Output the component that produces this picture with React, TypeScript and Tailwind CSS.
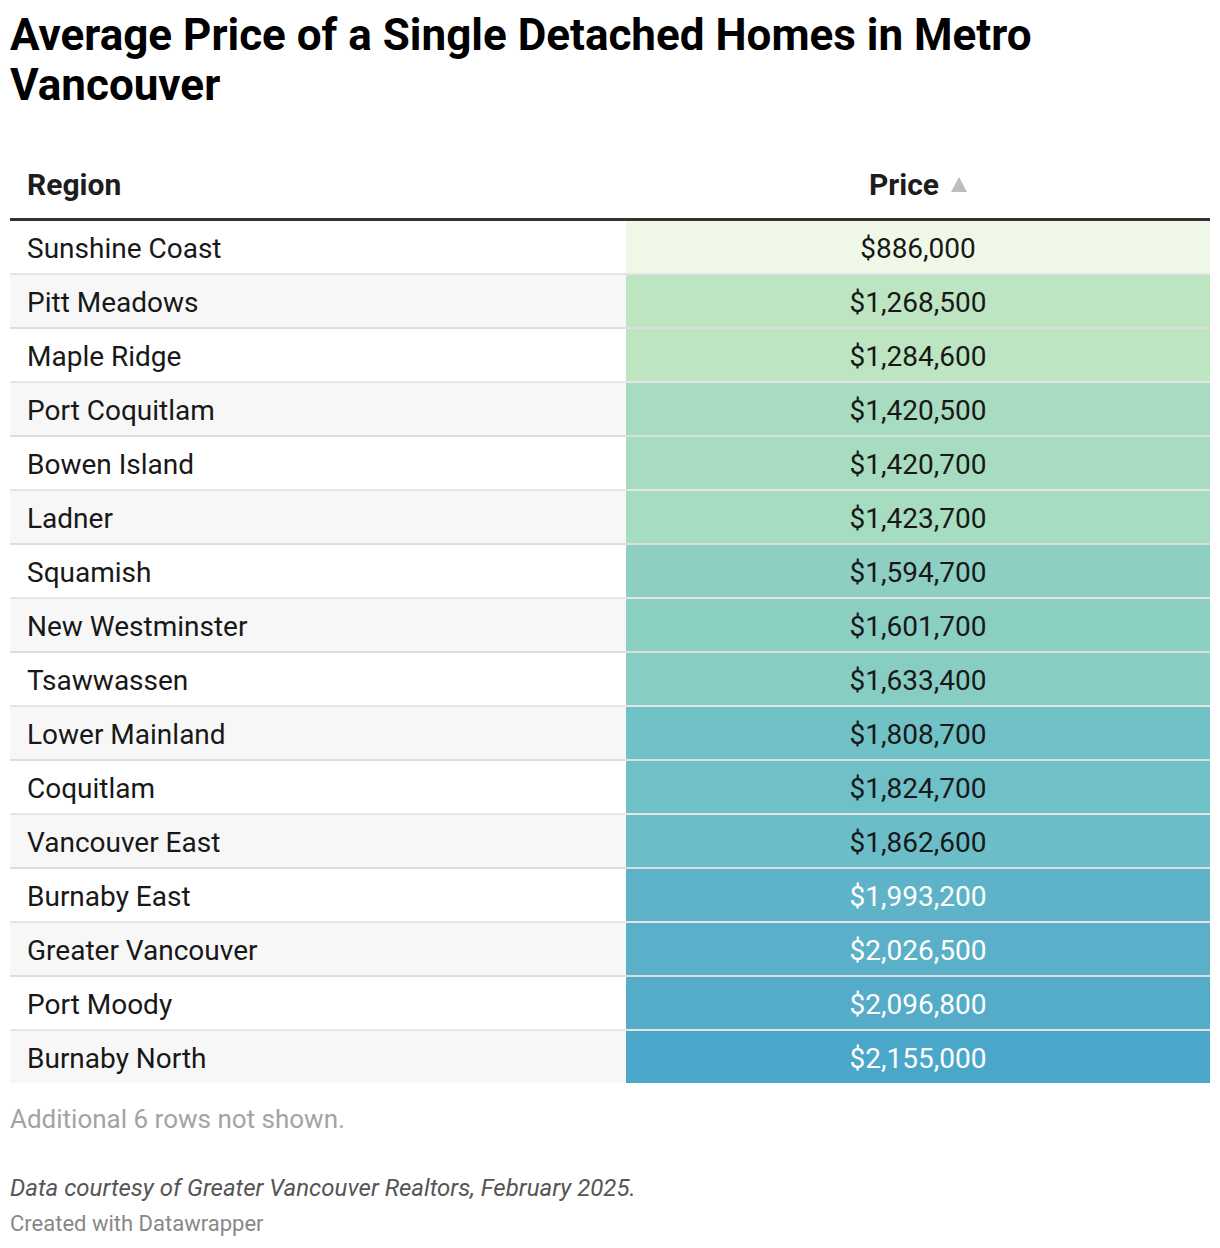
import React from "react";

type Row = { region: string; price: string; bg: string; light?: boolean };

const rows: Row[] = [
  { region: "Sunshine Coast", price: "$886,000", bg: "bg-[#f0f8e8]" },
  { region: "Pitt Meadows", price: "$1,268,500", bg: "bg-[#bee5c2]" },
  { region: "Maple Ridge", price: "$1,284,600", bg: "bg-[#bde5c2]" },
  { region: "Port Coquitlam", price: "$1,420,500", bg: "bg-[#a7dcc0]" },
  { region: "Bowen Island", price: "$1,420,700", bg: "bg-[#a7dcc0]" },
  { region: "Ladner", price: "$1,423,700", bg: "bg-[#a6dcc0]" },
  { region: "Squamish", price: "$1,594,700", bg: "bg-[#8dd0c3]" },
  { region: "New Westminster", price: "$1,601,700", bg: "bg-[#8bcfc3]" },
  { region: "Tsawwassen", price: "$1,633,400", bg: "bg-[#87cdc3]" },
  { region: "Lower Mainland", price: "$1,808,700", bg: "bg-[#70c2c6]" },
  { region: "Coquitlam", price: "$1,824,700", bg: "bg-[#6fc1c7]" },
  { region: "Vancouver East", price: "$1,862,600", bg: "bg-[#6bbec7]" },
  { region: "Burnaby East", price: "$1,993,200", bg: "bg-[#5fb3c8]", light: true },
  { region: "Greater Vancouver", price: "$2,026,500", bg: "bg-[#5ab0c8]", light: true },
  { region: "Port Moody", price: "$2,096,800", bg: "bg-[#54acc9]", light: true },
  { region: "Burnaby North", price: "$2,155,000", bg: "bg-[#4ba7ca]", light: true },
];

export default function App() {
  return (
    <div className="w-[1220px] min-h-[1248px] bg-white px-[10px] pt-[10px] font-['Roboto',sans-serif] text-[#181818]">
      {/* title */}
      <h1 className="text-[44px] leading-[50px] font-bold text-black">
        Average Price of a Single Detached Homes in Metro Vancouver
      </h1>

      {/* table */}
      <div className="mt-[40px]">
        <div className="flex h-[71px] items-center border-b-[3px] border-[#333333] text-[30px] font-bold text-[#1d1d1d]">
          <div className="w-[616px] pl-[17px]">Region</div>
          <div className="flex flex-1 items-center justify-center gap-[12px]">
            <span>Price</span>
            <svg width="16" height="15" viewBox="0 0 16 15" className="mt-[1px]">
              <path d="M8 0 L16 15 L0 15 Z" fill="#bdbdbd" />
            </svg>
          </div>
        </div>

        {rows.map((r, i) => (
          <div
            key={r.region}
            className={`flex text-[28px] ${i < rows.length - 1 ? "h-[54px] border-b-2 border-black/10" : "h-[52px]"} ${i % 2 === 1 ? "bg-[#f7f7f7]" : "bg-white"}`}
          >
            <div className="flex w-[616px] items-center pl-[17px] pt-[3px]">{r.region}</div>
            <div className={`flex flex-1 items-center justify-center pt-[3px] ${r.bg} ${r.light ? "text-white" : "text-[#181818]"}`}>
              {r.price}
            </div>
          </div>
        ))}
      </div>

      {/* notes */}
      <div className="mt-[21px] text-[26px] leading-[30px] text-[#a3a3a3]">Additional 6 rows not shown.</div>
      <div className="mt-[39px] text-[24px] leading-[30px] italic text-[#555555]">
        Data courtesy of Greater Vancouver Realtors, February 2025.
      </div>
      <div className="mt-[8px] text-[22px] leading-[26px] text-[#888888]">Created with Datawrapper</div>
    </div>
  );
}
